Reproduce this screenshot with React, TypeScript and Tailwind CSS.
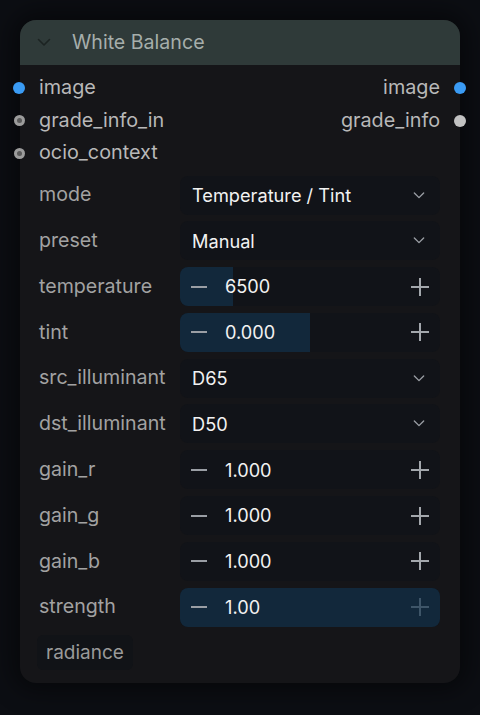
import React from "react";

type Widget =
  | { kind: "combo"; label: string; value: string }
  | { kind: "number"; label: string; value: string; fill: number; dimPlus?: boolean };

const widgets: Widget[] = [
  { kind: "combo", label: "mode", value: "Temperature / Tint" },
  { kind: "combo", label: "preset", value: "Manual" },
  { kind: "number", label: "temperature", value: "6500", fill: 53 },
  { kind: "number", label: "tint", value: "0.000", fill: 130 },
  { kind: "combo", label: "src_illuminant", value: "D65" },
  { kind: "combo", label: "dst_illuminant", value: "D50" },
  { kind: "number", label: "gain_r", value: "1.000", fill: 0 },
  { kind: "number", label: "gain_g", value: "1.000", fill: 0 },
  { kind: "number", label: "gain_b", value: "1.000", fill: 0 },
  { kind: "number", label: "strength", value: "1.00", fill: 260, dimPlus: true },
];

function Chevron({ className }: { className?: string }) {
  return (
    <svg width="14" height="9" viewBox="0 0 14 9" className={className} fill="none">
      <path d="M1.5 1.5 L7 7 L12.5 1.5" stroke="currentColor" strokeWidth="1.6" strokeLinecap="round" strokeLinejoin="round" />
    </svg>
  );
}

function Minus() {
  return (
    <svg width="18" height="18" viewBox="0 0 18 18" fill="none">
      <path d="M1 9 H17" stroke="#9a9ea4" strokeWidth="2" />
    </svg>
  );
}

function Plus({ dim }: { dim?: boolean }) {
  const c = dim ? "#3e5568" : "#a3a7ac";
  return (
    <svg width="18" height="18" viewBox="0 0 18 18" fill="none">
      <path d="M0 9 H18 M9 0 V18" stroke={c} strokeWidth="2" />
    </svg>
  );
}

export default function App() {
  return (
    <div
      className="w-[480px] h-[715px] bg-[#0c0e13] pt-[20px] pl-[20px]"
      style={{ fontFamily: "Inter, 'Noto Sans', sans-serif" }}
    >
      <div className="relative w-[440px] h-[663px] rounded-[16px] bg-[#151518] shadow-[0_0_24px_8px_rgba(0,0,0,0.45)] flex flex-col">
        {/* header */}
        <div className="h-[45px] rounded-t-[16px] bg-[#2f3a39] flex items-center pl-[17px]">
          <Chevron className="text-[#1c2322]" />
          <span className="ml-[21px] text-[19.6px] text-[#a6aeab] leading-none">White Balance</span>
        </div>

        {/* slots */}
        <div className="pt-[7px] flex flex-col">
          {[
            { l: "image", r: "image", lt: "blue", rt: "blue" },
            { l: "grade_info_in", r: "grade_info", lt: "ring", rt: "grey" },
            { l: "ocio_context", r: "", lt: "ring", rt: "" },
          ].map((s, i) => (
            <div key={i} className="relative h-[32.5px] flex items-center justify-between pl-[19px] pr-[20px]">
              {s.lt === "blue" ? (
                <span className="absolute left-[-7px] w-[12px] h-[12px] rounded-full bg-[#3a9bf4]" />
              ) : (
                <span className="absolute left-[-6px] w-[11px] h-[11px] rounded-full bg-[#9c9c9c] flex items-center justify-center">
                  <span className="w-[5px] h-[5px] rounded-full bg-[#5a5a5a]" />
                </span>
              )}
              <span className="text-[19.8px] text-[#b8b8b8] leading-none">{s.l}</span>
              <span className="text-[19.8px] text-[#b8b8b8] leading-none">{s.r}</span>
              {s.rt === "blue" && (
                <span className="absolute right-[-6px] w-[12px] h-[12px] rounded-full bg-[#3a9bf4]" />
              )}
              {s.rt === "grey" && (
                <span className="absolute right-[-6px] w-[12px] h-[12px] rounded-full bg-[#c2c2c2]" />
              )}
            </div>
          ))}
        </div>

        {/* widgets */}
        <div className="mt-[6px] flex flex-col gap-[6.8px] pl-[19px] pr-[20px]">
          {widgets.map((w, i) => (
            <div key={i} className="flex items-center h-[39px]">
              <span className="w-[141px] text-[19.6px] text-[#a2a2a2] leading-none">{w.label}</span>
              <div className="relative flex-1 h-[39px] rounded-[8px] bg-[#111318] overflow-hidden flex items-center">
                {w.kind === "combo" ? (
                  <>
                    <span className="pl-[12px] text-[18.2px] text-[#f2f2f2] leading-none flex-1">{w.value}</span>
                    <Chevron className="text-[#9a9ea4] mr-[14px] scale-[0.85]" />
                  </>
                ) : (
                  <>
                    {w.fill > 0 && (
                      <div className="absolute left-0 top-0 bottom-0 bg-[#12283b]" style={{ width: w.fill }} />
                    )}
                    <div className="relative flex items-center w-full">
                      <span className="ml-[10px]"><Minus /></span>
                      <span className="ml-[17px] text-[18.2px] text-[#f2f2f2] leading-none flex-1">{w.value}</span>
                      <span className="mr-[11px]"><Plus dim={w.dimPlus} /></span>
                    </div>
                  </>
                )}
              </div>
            </div>
          ))}
        </div>

        {/* badge */}
        <div className="mt-[8px] pl-[17px]">
          <span className="inline-flex items-center h-[35px] px-[9px] rounded-[6px] bg-[#111317] text-[19px] text-[#9a9a9a] leading-none">
            radiance
          </span>
        </div>
      </div>
    </div>
  );
}
